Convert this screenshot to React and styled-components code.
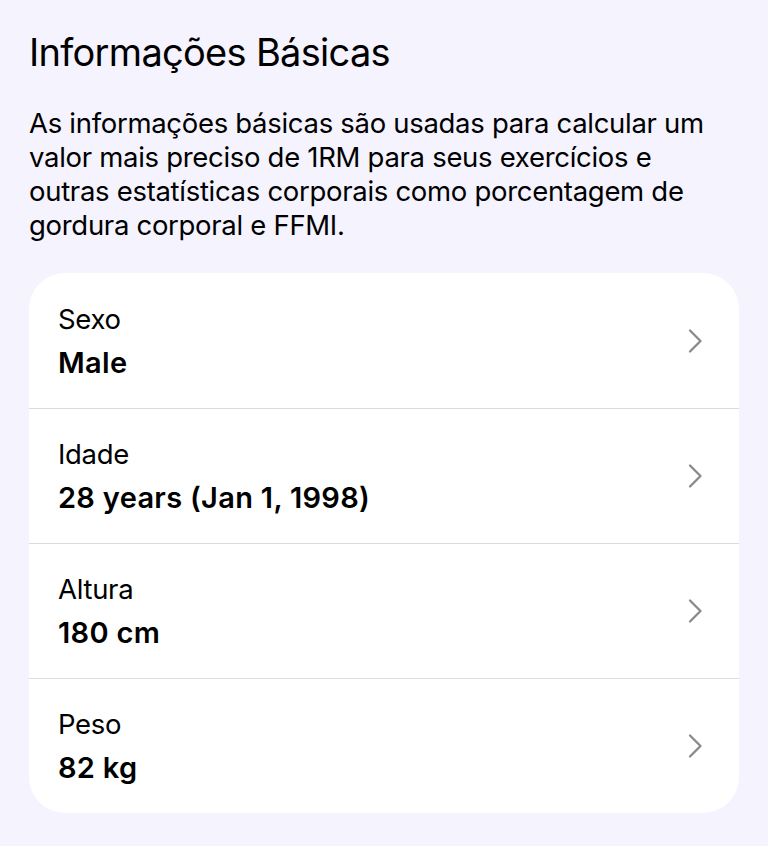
import React from "react";
import styled, { createGlobalStyle } from "styled-components";

const GlobalStyle = createGlobalStyle`
  html, body {
    margin: 0;
    padding: 0;
    background: #f5f3fe;
  }
  body {
    font-family: Inter, Roboto, "Liberation Sans", sans-serif;
    color: #000;
    -webkit-font-smoothing: antialiased;
  }
`;

const Page = styled.div`
  padding: 28px 29px 30px;
  min-height: 846px;
  box-sizing: border-box;
`;

const Title = styled.h1`
  margin: 0;
  font-size: 38px;
  font-weight: 400;
  line-height: 48px;
  letter-spacing: -0.7px;
`;

const Description = styled.p`
  margin: 30px 0 0;
  max-width: 695px;
  font-size: 27.5px;
  line-height: 34px;
  letter-spacing: -0.3px;
`;

const Card = styled.div`
  margin-top: 31px;
  background: #fff;
  border-radius: 36px;
  overflow: hidden;
`;

const Row = styled.div`
  height: 135px;
  display: flex;
  align-items: center;
  justify-content: space-between;
  padding: 0 36px 0 29px;
  box-sizing: border-box;
  & + & {
    border-top: 1.5px solid #dcdbe0;
  }
`;

const Texts = styled.div`
  display: flex;
  flex-direction: column;
  gap: 10px;
`;

const Label = styled.span`
  font-size: 27.5px;
  line-height: 34px;
  letter-spacing: -0.3px;
`;

const Value = styled.span`
  font-size: 29px;
  font-weight: 600;
  line-height: 34px;
  letter-spacing: 0.3px;
`;

const Chevron = () => (
  <svg width="16" height="26" viewBox="0 0 16 26" fill="none">
    <path
      d="M3 2.5 L13.5 13 L3 23.5"
      stroke="#8a8a8e"
      strokeWidth="2.3"
      strokeLinecap="round"
      strokeLinejoin="round"
    />
  </svg>
);

const items = [
  { label: "Sexo", value: "Male" },
  { label: "Idade", value: "28 years (Jan 1, 1998)" },
  { label: "Altura", value: "180 cm" },
  { label: "Peso", value: "82 kg" },
];

function App() {
  return (
    <>
      <GlobalStyle />
      <Page>
        <Title>Informações Básicas</Title>
        <Description>
          As informações básicas são usadas para calcular um valor mais preciso
          de 1RM para seus exercícios e outras estatísticas corporais como
          porcentagem de gordura corporal e FFMI.
        </Description>
        <Card>
          {items.map((item) => (
            <Row key={item.label}>
              <Texts>
                <Label>{item.label}</Label>
                <Value>{item.value}</Value>
              </Texts>
              <Chevron />
            </Row>
          ))}
        </Card>
      </Page>
    </>
  );
}

export default App;
